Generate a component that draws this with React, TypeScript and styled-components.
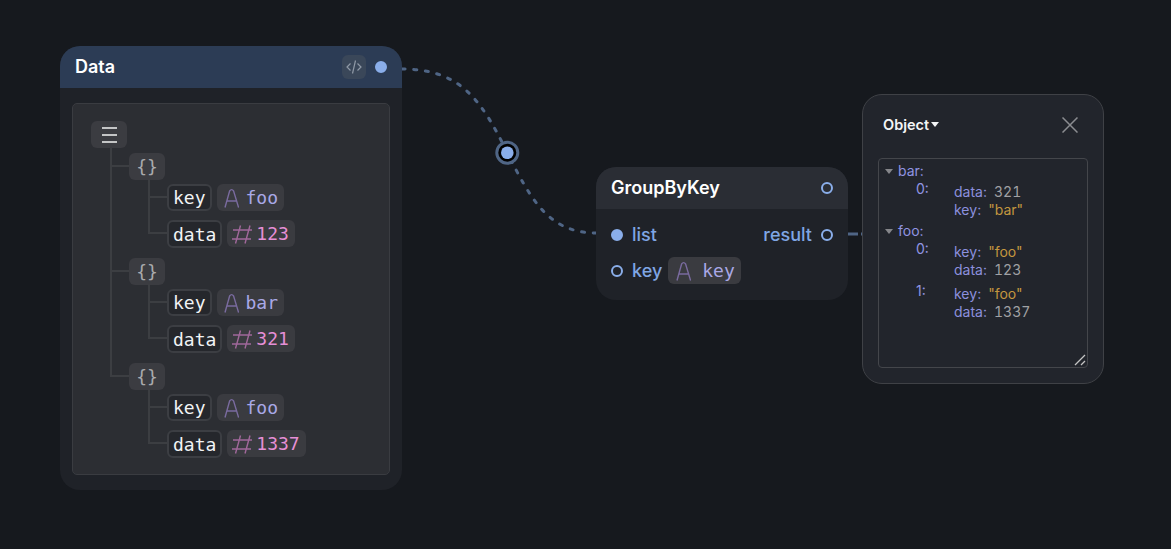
import React from 'react';
import styled, { createGlobalStyle } from 'styled-components';

const GlobalStyle = createGlobalStyle`
  html, body {
    margin: 0;
    background: #16191e;
  }
  body {
    font-family: Inter, "Liberation Sans", sans-serif;
    overflow: hidden;
  }
`;

const Canvas = styled.div`
  position: relative;
  width: 1171px;
  height: 549px;
  background: #16191e;
  overflow: hidden;
`;

const Edges = styled.svg`
  position: absolute;
  left: 0;
  top: 0;
`;

const Node = styled.div<{ $x: number; $y: number; $w: number }>`
  position: absolute;
  left: ${p => p.$x}px;
  top: ${p => p.$y}px;
  width: ${p => p.$w}px;
  background: #1f2228;
  border-radius: 20px;
  overflow: hidden;
`;

const NodeHeader = styled.div<{ $blue?: boolean }>`
  height: 42px;
  padding: 0 15px;
  display: flex;
  align-items: center;
  gap: 9px;
  background: ${p => (p.$blue ? '#2c3c55' : '#2a2d34')};
`;

const NodeTitle = styled.div`
  flex: 1;
  color: #fff;
  font-size: 18px;
  font-weight: 600;
  margin-top: -2px;
`;

const CodeButton = styled.div`
  width: 24px;
  height: 24px;
  border-radius: 6px;
  background: #3a4759;
  display: flex;
  align-items: center;
  justify-content: center;
`;

const Pin = styled.div<{ $filled?: boolean }>`
  width: 12px;
  height: 12px;
  box-sizing: border-box;
  flex: none;
  border-radius: 50%;
  border: 2px solid #8aaeea;
  background: ${p => (p.$filled ? '#8aaeea' : 'transparent')};
`;

const DataBody = styled.div`
  padding: 15px 12px;
`;

const Panel = styled.div`
  height: 372px;
  box-sizing: border-box;
  padding: 17px 18px;
  background: #2c2e33;
  border: 1px solid #3a3c41;
  border-radius: 5px;
`;

const TypeChip = styled.div`
  width: 36px;
  height: 27px;
  border-radius: 6px;
  background: #3b3c41;
  display: flex;
  align-items: center;
  justify-content: center;
  color: #a9aaad;
  font-family: "DejaVu Sans Mono", monospace;
  font-size: 18px;
  font-weight: 300;
`;

const Children = styled.div`
  display: flex;
  flex-direction: column;
  padding-left: 38px;
  margin-top: 5px;
  gap: 10px;
`;

const Branch = styled.div<{ $up: number }>`
  position: relative;

  &::before {
    content: '';
    position: absolute;
    left: -19px;
    width: 19px;
    bottom: calc(100% - 14px);
    height: ${p => p.$up}px;
    box-sizing: border-box;
    border-left: 2px solid #3c3e42;
    border-bottom: 2px solid #3c3e42;
  }
`;

const Fields = styled.div`
  display: flex;
  flex-direction: column;
  padding-left: 38px;
  margin-top: 4px;
  gap: 9px;
`;

const Field = styled(Branch)`
  display: flex;
  gap: 5px;
`;

const KeyChip = styled.div<{ $tall?: boolean }>`
  height: ${p => (p.$tall ? 28 : 27)}px;
  box-sizing: border-box;
  padding: 0 4px;
  display: flex;
  align-items: center;
  border: 2px solid #3c3e43;
  border-radius: 6px;
  background: #25272c;
  color: #f1f3f5;
  font-family: "DejaVu Sans Mono", monospace;
  font-size: 18px;
`;

const ValueChip = styled.div<{ $kind: 'text' | 'num'; $wide?: boolean }>`
  height: 27px;
  padding: 0 6px 0 ${p => (p.$kind === 'num' ? 5 : p.$wide ? 7 : 6)}px;
  display: flex;
  align-items: center;
  gap: ${p => (p.$kind === 'num' ? 4 : p.$wide ? 11 : 7)}px;
  border-radius: 6px;
  background: #3a3b40;
  color: ${p => (p.$kind === 'text' ? '#a9a8e6' : '#e68fd6')};
  font-family: "DejaVu Sans Mono", monospace;
  font-size: 18px;
`;

const GroupBody = styled.div`
  padding: 12px 15px 16px;
  display: flex;
  flex-direction: column;
  gap: 9px;
`;

const PinRow = styled.div`
  height: 27px;
  display: flex;
  align-items: center;
  gap: 9px;
`;

const PinLabel = styled.span<{ $push?: boolean }>`
  color: #7fa6e4;
  font-size: 18px;
  font-weight: 500;
  margin-left: ${p => (p.$push ? 'auto' : '0')};
`;

const KeyLabel = styled(PinLabel)`
  margin-right: -3px;
`;

const Inspector = styled.div`
  position: absolute;
  left: 862px;
  top: 94px;
  width: 242px;
  height: 290px;
  box-sizing: border-box;
  padding: 0 15px 15px;
  display: flex;
  flex-direction: column;
  background: #22252c;
  border: 1px solid #3f4146;
  border-radius: 20px;
`;

const InspectorBar = styled.div`
  height: 63px;
  flex: none;
  display: flex;
  align-items: center;
  justify-content: space-between;
  padding: 0 10px 4px 5px;
  box-sizing: border-box;
`;

const Dropdown = styled.div`
  display: flex;
  align-items: center;
  gap: 2px;
  color: #f4f5f7;
  font-size: 14.5px;
  font-weight: 600;
`;

const Caret = styled.span<{ $color: string; $size: number }>`
  flex: none;
  width: 0;
  height: 0;
  border-left: ${p => p.$size}px solid transparent;
  border-right: ${p => p.$size}px solid transparent;
  border-top: ${p => p.$size + 1}px solid ${p => p.$color};
`;

const OutputBox = styled.div`
  position: relative;
  flex: 1;
  box-sizing: border-box;
  padding: 3px 0 0 6px;
  border: 1px solid #44464b;
  border-radius: 4px;
  background: #22252c;
  font-size: 14px;
  line-height: 18px;
`;

const ResizeHandle = styled.svg`
  position: absolute;
  right: 1px;
  bottom: 1px;
`;

const GroupRow = styled.div`
  display: flex;
  align-items: center;
  gap: 5px;
  color: #9094e2;
`;

const Group = styled.div`
  margin-bottom: 3px;
`;

const Entry = styled.div`
  display: flex;
  margin: 0 0 3px 31px;
`;

const EntryIndex = styled.div`
  width: 38px;
  flex: none;
  color: #9094e2;
`;

const EntryFields = styled.div`
  margin-top: 3px;
`;

const Prop = styled.div`
  display: flex;
  gap: 7px;
  color: #8c90de;
`;

const PropValue = styled.span<{ $string?: boolean }>`
  color: ${p => (p.$string ? '#c4973f' : '#a0a1a4')};
  font-variant-numeric: tabular-nums;
`;

const TextIcon = () => (
  <svg width="16" height="20" viewBox="0 0 16 20" fill="none" stroke="#7a6b9f" strokeWidth="1.4">
    <path d="M2 19.5 L6.6 3 Q8.6 0.2 10.6 3 L15.6 19.5 M3.8 13 H13.8" />
  </svg>
);

const HashIcon = () => (
  <svg width="20" height="20" viewBox="0 0 20 20" fill="none" stroke="#a0689a" strokeWidth="1.4">
    <path d="M1 6 H20 M0 15 H19 M8.5 1.5 L3.5 19.5 M18 1.5 L13 19.5" />
  </svg>
);

const MenuIcon = () => (
  <svg width="16" height="16" viewBox="0 0 16 16" stroke="#f2f2f2" strokeWidth="1.5">
    <path d="M1 1 H16 M1 8 H16 M1 15 H16" />
  </svg>
);

const CodeIcon = () => (
  <svg width="16" height="16" viewBox="0 0 16 16" fill="none" stroke="#8f99a6" strokeWidth="1.2">
    <path d="M4.5 4.5 L1 8 L4.5 11.5 M11.5 4.5 L15 8 L11.5 11.5 M9.5 1.5 L6.5 14.5" />
  </svg>
);

const CloseIcon = () => (
  <svg width="16" height="16" viewBox="0 0 16 16" stroke="#8b8d91" strokeWidth="1.5">
    <path d="M0.5 0.5 L15.5 15.5 M15.5 0.5 L0.5 15.5" />
  </svg>
);

const items = [
  { key: 'foo', data: '123' },
  { key: 'bar', data: '321' },
  { key: 'foo', data: '1337' },
];

const App: React.FC = () => {
  return (
    <Canvas>
      <GlobalStyle />
      <Edges width="1171" height="549" fill="none">
        <path
          d="M402 69 C462 69 482 102 507 152 C530 198 548 233 596 233"
          stroke="#4f6585"
          strokeWidth="3"
          strokeLinecap="round"
          strokeDasharray="3 8.7"
        />
        <path d="M848 234 L870 234" stroke="#4f6585" strokeWidth="3" strokeDasharray="10 3 3 30" />
        <circle cx="507.3" cy="152.7" r="10.5" fill="#000" stroke="#4f6585" strokeWidth="3" />
        <circle cx="507.3" cy="152.7" r="6.3" fill="#8aaeea" />
      </Edges>

      <Node $x={60} $y={46} $w={342}>
        <NodeHeader $blue>
          <NodeTitle>Data</NodeTitle>
          <CodeButton>
            <CodeIcon />
          </CodeButton>
          <Pin $filled />
        </NodeHeader>
        <DataBody>
          <Panel>
            <TypeChip>
              <MenuIcon />
            </TypeChip>
            <Children>
              {items.map((item, i) => (
                <Branch key={i} $up={i === 0 ? 19 : 105 + (i === 1 ? 19 : 0)}>
                  <TypeChip>{'{}'}</TypeChip>
                  <Fields>
                    <Field $up={19}>
                      <KeyChip>key</KeyChip>
                      <ValueChip $kind="text">
                        <TextIcon />
                        {item.key}
                      </ValueChip>
                    </Field>
                    <Field $up={36}>
                      <KeyChip $tall>data</KeyChip>
                      <ValueChip $kind="num">
                        <HashIcon />
                        {item.data}
                      </ValueChip>
                    </Field>
                  </Fields>
                </Branch>
              ))}
            </Children>
          </Panel>
        </DataBody>
      </Node>

      <Node $x={596} $y={167} $w={252}>
        <NodeHeader>
          <NodeTitle>GroupByKey</NodeTitle>
          <Pin />
        </NodeHeader>
        <GroupBody>
          <PinRow>
            <Pin $filled />
            <PinLabel>list</PinLabel>
            <PinLabel $push>result</PinLabel>
            <Pin />
          </PinRow>
          <PinRow>
            <Pin />
            <KeyLabel>key</KeyLabel>
            <ValueChip $kind="text" $wide>
              <TextIcon />
              key
            </ValueChip>
          </PinRow>
        </GroupBody>
      </Node>

      <Inspector>
        <InspectorBar>
          <Dropdown>
            Object
            <Caret $color="#f4f5f7" $size={4} />
          </Dropdown>
          <CloseIcon />
        </InspectorBar>
        <OutputBox>
          <Group>
            <GroupRow>
              <Caret $color="#85868a" $size={4} />
              bar:
            </GroupRow>
            <Entry>
              <EntryIndex>0:</EntryIndex>
              <EntryFields>
                <Prop>
                  data: <PropValue>321</PropValue>
                </Prop>
                <Prop>
                  key: <PropValue $string>"bar"</PropValue>
                </Prop>
              </EntryFields>
            </Entry>
          </Group>
          <Group>
            <GroupRow>
              <Caret $color="#85868a" $size={4} />
              foo:
            </GroupRow>
            <Entry>
              <EntryIndex>0:</EntryIndex>
              <EntryFields>
                <Prop>
                  key: <PropValue $string>"foo"</PropValue>
                </Prop>
                <Prop>
                  data: <PropValue>123</PropValue>
                </Prop>
              </EntryFields>
            </Entry>
            <Entry>
              <EntryIndex>1:</EntryIndex>
              <EntryFields>
                <Prop>
                  key: <PropValue $string>"foo"</PropValue>
                </Prop>
                <Prop>
                  data: <PropValue>1337</PropValue>
                </Prop>
              </EntryFields>
            </Entry>
          </Group>
          <ResizeHandle width="12" height="12" viewBox="0 0 12 12" stroke="#c4c4c4" strokeWidth="1.3">
            <path d="M1 11 L11 1 M7 11 L11 7" />
          </ResizeHandle>
        </OutputBox>
      </Inspector>
    </Canvas>
  );
};

export default App;
